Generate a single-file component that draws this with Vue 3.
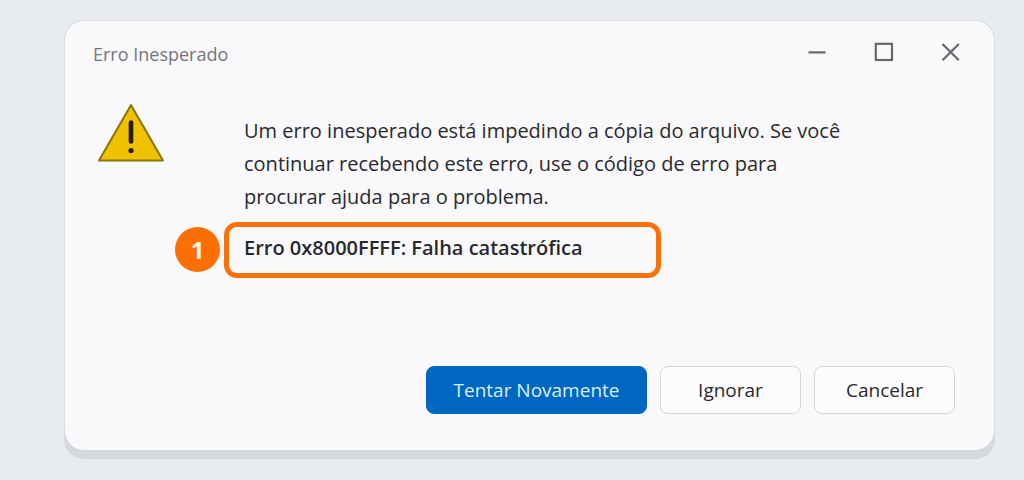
<script setup>
const message =
  'Um erro inesperado está impedindo a cópia do arquivo. Se você continuar recebendo este erro, use o código de erro para procurar ajuda para o problema.'
</script>

<template>
  <main class="desktop">
    <section class="dialog" role="alertdialog" aria-labelledby="dialog-title" aria-describedby="dialog-message">
      <header class="titlebar">
        <h1 id="dialog-title" class="title">Erro Inesperado</h1>
        <div class="window-controls">
          <button type="button" class="control" aria-label="Minimizar">
            <svg viewBox="0 0 20 20" width="20" height="20"><path d="M1.5 10.4H18.5" /></svg>
          </button>
          <button type="button" class="control" aria-label="Maximizar">
            <svg viewBox="0 0 20 20" width="20" height="20"><rect x="1.8" y="1.8" width="16.2" height="16.2" /></svg>
          </button>
          <button type="button" class="control" aria-label="Fechar">
            <svg viewBox="0 0 20 20" width="20" height="20"><path d="M1.5 2L17.8 18.3M17.8 2L1.5 18.3" /></svg>
          </button>
        </div>
      </header>

      <div class="body">
        <svg class="warning" viewBox="0 0 68 60" width="68" height="60" aria-hidden="true">
          <path class="warning-shape" d="M34 2L66 57.5H2Z" />
          <path class="warning-bar" d="M34 19.5V38.5" />
          <circle class="warning-dot" cx="34" cy="47.5" r="2.6" />
        </svg>
        <div class="content">
          <p id="dialog-message" class="message">{{ message }}</p>
          <div class="error">
            <span class="badge">1</span>
            <strong class="code">Erro 0x8000FFFF: Falha catastrófica</strong>
          </div>
        </div>
      </div>

      <footer class="actions">
        <button type="button" class="action primary">Tentar Novamente</button>
        <button type="button" class="action">Ignorar</button>
        <button type="button" class="action">Cancelar</button>
      </footer>
    </section>
  </main>
</template>

<style>
body {
  background: #e8ebf0;
}
</style>

<style scoped>
.desktop {
  padding: 20px 29px 29px 64px;
  font-family: "Open Sans", "Noto Sans", sans-serif;
  color: #2a2a2e;
}
.dialog {
  box-sizing: border-box;
  padding: 20px 39px 36px 28px;
  border: 1px solid #d9dce1;
  border-bottom-width: 0;
  border-radius: 20px;
  background: #f9f9fc;
  box-shadow: 0 9px 0 #d5d8dd;
}
.titlebar {
  display: flex;
  justify-content: space-between;
  align-items: center;
}
.title {
  margin: 0;
  font-size: 18px;
  line-height: 26px;
  font-weight: 400;
  color: #75767a;
}
.window-controls {
  display: flex;
  gap: 47px;
  margin: 0 -6px 4px 0;
}
.control {
  display: flex;
  padding: 0;
  border: 0;
  background: none;
}
.control svg {
  fill: none;
  stroke: #66676b;
  stroke-width: 2.2;
}
.body {
  display: flex;
  align-items: flex-start;
  gap: 79px;
  margin-top: 36px;
  padding-left: 4px;
}
.warning {
  flex: none;
}
.warning-shape {
  fill: #efc100;
  stroke: #8b7410;
  stroke-width: 2;
  stroke-linejoin: round;
}
.warning-bar {
  stroke: #251d08;
  stroke-width: 4.6;
  stroke-linecap: round;
}
.warning-dot {
  fill: #251d08;
}
.content {
  flex: 1;
  max-width: 620px;
  padding-top: 11px;
}
.message {
  margin: 0;
  font-size: 20px;
  line-height: 33px;
}
.error {
  position: relative;
  box-sizing: border-box;
  max-width: 437px;
  margin: 9px 0 0 -20px;
  padding: 5px 15px 10px;
  border: 5px solid #f97108;
  border-radius: 13px;
}
.code {
  display: block;
  font-size: 20px;
  line-height: 31px;
  font-weight: 600;
}
.badge {
  position: absolute;
  top: 0;
  left: -54px;
  width: 45px;
  height: 45px;
  border-radius: 50%;
  background: #fb6f04;
  color: #fdf4ea;
  font-size: 24px;
  line-height: 45px;
  font-weight: 700;
  text-align: center;
}
.actions {
  display: flex;
  justify-content: flex-end;
  gap: 13px;
  margin-top: 88px;
}
.action {
  box-sizing: border-box;
  min-width: 141px;
  height: 48px;
  padding: 0 26px;
  border: 1px solid #d5d6d9;
  border-radius: 8px;
  background: #fcfcfd;
  color: #2a2a2e;
  font: inherit;
  font-size: 19px;
  line-height: 28px;
}
.primary {
  min-width: 221px;
  border-color: #0067c0;
  background: #0067c0;
  color: #d9f0ff;
}
</style>
